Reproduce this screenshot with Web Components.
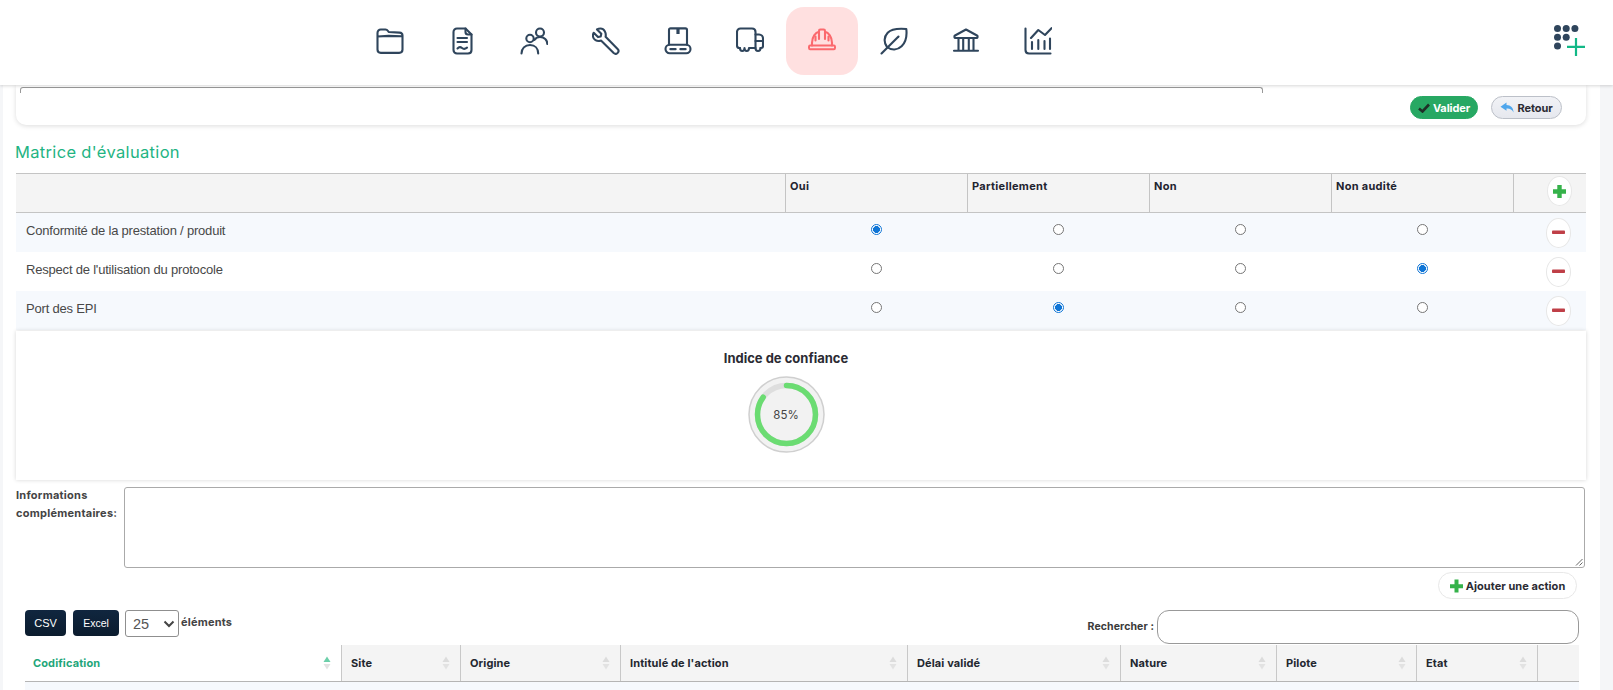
<!DOCTYPE html>
<html lang="fr"><head><meta charset="utf-8"><title>Matrice</title>
<style>
html,body{margin:0;padding:0;height:690px;overflow:hidden;background:#f5f6f8;font-family:Inter,"Liberation Sans",sans-serif;color:#333}
</style></head><body>
<app-header></app-header>
<page-body>
  <top-card></top-card>
  <section-title>Matrice d'évaluation</section-title>
  <eval-matrix></eval-matrix>
  <gauge-card value="85">Indice de confiance</gauge-card>
  <info-field></info-field>
  <action-bar></action-bar>
  <list-tools></list-tools>
  <list-head></list-head>
</page-body>
<script>
const INK='#2f455c';
const ICONS={
folder:`<path d="M1.500 6c0-2 1.300-3.500 3.300-3.500h4.700c1.200 0 1.800.5 2.500 1.500l.7 1 10.800.6c1.700.1 3 1.100 3 3v14c0 1.900-1.300 3.300-3.300 3.300H4.800c-2 0-3.300-1.400-3.300-3.300zM1.500 9.500l11-.6 13 .4"/>`,
doc:`<path d="M9 1.500h8.500l6 6V23c0 2-1.500 3.500-3.500 3.500H9C7 26.500 5.500 25 5.500 23V5C5.500 3 7 1.500 9 1.500z"/><path d="M17.500 1.500V5c0 1.500 1 2.500 2.500 2.500h3.500M9.500 11h9.500M9.500 15h9.500M9.500 21.500c1.500-1.700 3-1.700 4.500-.5s3.200 1 5-.3"/>`,
users:`<circle cx="10" cy="11.500" r="3.700"/><circle cx="20" cy="5.500" r="4"/><path d="M1.500 26.500c0-5 3.500-8.500 8.500-8.500s8.200 3.500 8.200 8.500M14.500 12.800c1.400-1.800 3.300-2.800 5.500-2.800 4.300 0 7.300 3 7.300 7"/>`,
wrench:`<path d="M8.500 1.500c-1.300 0-2.500.3-3.500.9l4.300 4.300-.6 2.700-2.700.7L1.700 5.800C1 7 .8 8.300 1 9.600c.6 3 3.700 5 6.900 4.300l1.100-.3L21.700 26c1.300 1.100 3 1 4-.1s1-2.800-.1-3.900L13.600 9.700c.8-3.800-1.300-8.200-5.100-8.200z"/>`,
conveyor:`<rect x="1.500" y="17.800" width="25" height="8.500" rx="4.200"/><path d="M5 17.800V3c0-1 .6-1.600 1.600-1.600h14.800c1 0 1.600.6 1.600 1.600v14.800"/><path d="M14 1.500v5.500" stroke-width="3.200" stroke-linecap="butt"/><path d="M6.500 22.100h5M16.500 22.100h5" stroke-width="2.400"/>`,
truck:`<path d="M4 21H3.500C2 21 1 19.800 1 18.300V5C1 2.900 2.500 1.500 4.500 1.500H16c2 0 3.500 1.500 3.500 3.500v16H18"/><path d="M19.500 7.500H23c2.500 0 4 2 4 4V19c0 1.200-.8 2-2 2h-.5M19.500 14H27"/><path d="M4 21c0 4 4.500 4 4.500 0 0 4 4.500 4 4.500 0M13 21h5.500M19.500 21c0 4 5 4 5 0"/>`,
helmet:`<path d="M2 18.500h24c1.300 0 1.300 3.700 0 3.700H2c-1.300 0-1.300-3.700 0-3.700z"/><path d="M4 18.500v-2.700C4 10 7.500 5.500 11 4.800v-.9c0-.8.500-1.400 1.300-1.400h3.400c.8 0 1.300.6 1.300 1.400v.9c3.500.7 7 5.200 7 11v2.700"/><path d="M11 5v7M17 5v7M7.500 9.500v4M20.500 9.500v4"/>`,
leaf:`<path d="M26.300 2c-7-.6-14.500-.6-18.600 3.700C3.700 9.800 3.800 15.800 7 20c4.500 3.500 10.500 3.300 14.600-.7C26 15 27 8 26.300 2z"/><path d="M1.500 26.500 18.500 9.500"/>`,
bank:`<path d="M14 2.500 3 8.500c-1 .6-.8 2.500.5 2.500h21c1.300 0 1.500-1.900.5-2.500z"/><path d="M6.500 11v12M11.200 11v12M16.800 11v12M21.500 11v12M2 23.700h24"/>`,
chart:`<path d="M1.500 1.500V23c0 2 1.500 3.500 3.500 3.500h21.500"/><path d="M7 11l7.300-8 6.700 5 6.500-6.800"/><path d="M8 22v-7M14.300 22V13M20.500 22v-8M26 22V11.500"/>`
};
function def(name,css,html,extra){
  customElements.define(name,class extends HTMLElement{
    constructor(){super();const r=this.attachShadow({mode:'open'});
      r.innerHTML=`<style>${css}</style>`+(typeof html==='function'?html(this):html);}
    connectedCallback(){if(typeof extra==='function')extra(this,this.shadowRoot);}
  });
}
const HEAD='700 11px Inter,"Liberation Sans",sans-serif';
def('nav-icon',`
:host{display:flex;width:72px;height:68px;align-items:center;justify-content:center;border-radius:18px}
:host([active]){background:#ffe0e0}
svg{width:28px;height:28px;fill:none;stroke:${INK};stroke-width:2.100;stroke-linecap:round;stroke-linejoin:round;display:block}
:host([active]) svg{stroke:#fb6a6e}`,'<svg viewBox="0 0 28 28"></svg>',(el,r)=>{r.querySelector('svg').innerHTML=ICONS[el.getAttribute('name')]||''});
def('app-header',`
:host{display:flex;height:85px;box-sizing:border-box;padding:7px 27px 0 354px;background:#fff;position:relative;z-index:2;box-shadow:0 1px 3px rgba(0,0,0,.16);justify-content:space-between}
nav{display:flex;height:68px}
.grid{width:32px;height:32px;margin-top:18px;display:block}`,`<nav>
<nav-icon name="folder"></nav-icon><nav-icon name="doc"></nav-icon><nav-icon name="users"></nav-icon><nav-icon name="wrench"></nav-icon><nav-icon name="conveyor"></nav-icon><nav-icon name="truck"></nav-icon><nav-icon name="helmet" active></nav-icon><nav-icon name="leaf"></nav-icon><nav-icon name="bank"></nav-icon><nav-icon name="chart"></nav-icon></nav>
<svg class="grid" viewBox="0 0 32 32"><g fill="${INK}"><circle cx="3.500" cy="3.500" r="3.500"/><circle cx="12.200" cy="3.500" r="3.500"/><circle cx="20.900" cy="3.500" r="3.500"/><circle cx="3.500" cy="12.200" r="3.500"/><circle cx="12.200" cy="12.200" r="3.500"/><circle cx="3.500" cy="20.900" r="3.500"/></g><path d="M22 13v18M13 21.800h18" stroke="#12b886" stroke-width="2.200" fill="none"/></svg>`);
def('page-body',`:host{display:block;margin:0 13px 0 3px;background:#fff;height:605px;overflow:hidden;padding:0 0 0 13px;box-sizing:border-box}`,'<slot></slot>');
def('pill-btn',`
:host{display:inline-flex;align-items:center;justify-content:center;gap:3px;box-sizing:border-box;height:23px;border-radius:12px;font:${HEAD};letter-spacing:-.1px;color:#2b2b33;border:1px solid #bcc0c8;background:linear-gradient(#f1f2f6,#e6e8ee)}
:host([kind=ok]){background:#27a863;border-color:#27a863;color:#fff}`,`<slot name="i"></slot><slot></slot>`);
def('top-card',`
:host{display:flex;box-sizing:border-box;height:40px;width:1570px;background:#fff;border-radius:0 0 10px 10px;box-shadow:0 1px 5px rgba(0,0,0,.14);padding:0 24px 0 4px;position:relative}
.clip{width:1243px;height:6px;margin-top:2px;border:1px solid #999;border-bottom:0;box-sizing:border-box;border-radius:3px 3px 0 0}
.acts{margin-left:auto;display:flex;gap:13px;padding-top:11px}
pill-btn{flex:none}
svg{display:block}`,`<div class="clip"></div><div class="acts">
<pill-btn kind="ok" style="width:68px"><svg slot="i" viewBox="0 0 12 10" width="12" height="10"><path d="M1 5.500l3.500 3 6.500-7" fill="none" stroke="#1f2f27" stroke-width="2.600"/></svg>Valider</pill-btn>
<pill-btn style="width:71px"><svg slot="i" viewBox="0 0 14 11" width="14" height="11"><path d="M6.500.500L.5 4.700 6.500 8.800V6.600c3.200-.2 5.500.8 7 3.900 0-5-2.800-7.300-7-7.600z" fill="#4fa6ec"/></svg>Retour</pill-btn></div>`);
def('section-title',`:host{display:block;font:400 16.500px/20px Inter,"Liberation Sans",sans-serif;color:#1fb483;margin:17px 0 0 -1px;height:31px;letter-spacing:.33px}`,'<slot></slot>');
def('round-btn',`
:host{display:flex;width:25px;height:30px;box-sizing:border-box;border:1px solid #e7e7e7;border-radius:50%;background:#fff;align-items:center;justify-content:center}
svg{width:15px;height:15px;display:block}`,'<svg viewBox="0 0 15 15"></svg>',(el,r)=>{const s=r.querySelector('svg');
 s.innerHTML=el.getAttribute('kind')==='add'?'<path d="M5.300 1h4.400v4.300H14v4.400H9.700V14H5.300V9.700H1V5.300h4.300z" fill="#35b24a"/>':'<rect x="1" y="5.500" width="13" height="3.600" rx=".8" fill="#bf3f47"/>'});
def('radio-dot',`
:host{display:block;box-sizing:border-box;width:11px;height:11px;border-radius:50%;border:1px solid #767676;background:#fff}
:host([on]){border:1.500px solid #0f75d6;background:radial-gradient(circle,#0f75d6 0 3.200px,#fff 3.700px)}`,'');
def('eval-matrix',`
:host{display:block;width:1570px;font:13px "Liberation Sans",sans-serif;letter-spacing:-.2px;color:#484848}
.row{display:grid;grid-template-columns:769px 182px 182px 182px 182px 73px;align-items:center;height:39px}
.head{height:40px;background:#f4f4f4;border-top:1px solid #c4c4c4;border-bottom:1px solid #c4c4c4;box-sizing:border-box;align-items:stretch;font:${HEAD};letter-spacing:.3px;color:#1f2430}
.head>div{padding:5px 4px;border-left:1px solid #c4c4c4}
.head>div:first-child{border-left:0}
.name{padding:0 0 4px 10px}
.alt{background:#f6f9fd}
.rd{display:flex;justify-content:center;padding-bottom:6px}
.act{display:flex;padding-left:33px}
.head .act{padding:2px 0 0 33px}`,`
<div class="row head"><div></div><div>Oui</div><div>Partiellement</div><div>Non</div><div>Non audité</div><div class="act"><round-btn kind="add"></round-btn></div></div>
<div class="row alt"><div class="name">Conformité de la prestation / produit</div><div class="rd"><radio-dot on></radio-dot></div><div class="rd"><radio-dot></radio-dot></div><div class="rd"><radio-dot></radio-dot></div><div class="rd"><radio-dot></radio-dot></div><div class="act"><round-btn></round-btn></div></div>
<div class="row"><div class="name">Respect de l'utilisation du protocole</div><div class="rd"><radio-dot></radio-dot></div><div class="rd"><radio-dot></radio-dot></div><div class="rd"><radio-dot></radio-dot></div><div class="rd"><radio-dot on></radio-dot></div><div class="act"><round-btn></round-btn></div></div>
<div class="row alt"><div class="name">Port des EPI</div><div class="rd"><radio-dot></radio-dot></div><div class="rd"><radio-dot on></radio-dot></div><div class="rd"><radio-dot></radio-dot></div><div class="rd"><radio-dot></radio-dot></div><div class="act"><round-btn></round-btn></div></div>`);
def('gauge-card',`
:host{display:block;box-sizing:border-box;width:1570px;height:149px;margin-top:1px;background:#fff;box-shadow:0 0 4px rgba(0,0,0,.17);padding:19px 30px 0 0;text-align:center;font:700 13px/16px Inter,"Liberation Sans",sans-serif;color:#2b2b33}
.g{position:relative;width:77px;height:77px;margin:10px auto 0}
svg{width:77px;height:77px;display:block}
.v{position:absolute;inset:0;display:flex;align-items:center;justify-content:center;font:400 11.500px Inter,"Liberation Sans",sans-serif;color:#444}`,`<slot></slot>
<div class="g"><svg viewBox="0 0 77 77"><circle cx="38.500" cy="38.500" r="37.500" fill="#f2f2f2" stroke="#cfcfcf" stroke-width="1.500"/><circle cx="38.500" cy="38.500" r="29" fill="none" stroke="#dedede" stroke-width="5.500"/><circle cx="38.500" cy="38.500" r="29" fill="none" stroke="#6bdc72" stroke-width="5.500" stroke-linecap="round" stroke-dasharray="154.900 182.200" transform="rotate(-90 38.500 38.500)"/></svg><div class="v">85%</div></div>`);
def('info-field',`
:host{display:flex;margin-top:7px;height:81px;font:${HEAD};line-height:18px;letter-spacing:.25px;color:#444}
label{width:108px;flex:none;margin-top:-1px}
.ta{width:1461px;height:81px;box-sizing:border-box;border:1px solid #aaa;border-radius:3px;background:#fff;position:relative}
.ta svg{position:absolute;right:1px;bottom:1px;width:8px;height:8px}`,`<label>Informations complémentaires:</label><div class="ta"><svg viewBox="0 0 8 8"><path d="M1 7.500 7.500 1M4.500 7.500 7.500 4.500" stroke="#666" stroke-width="1"/></svg></div>`);
def('action-bar',`
:host{display:flex;justify-content:flex-end;width:1561px;margin-top:4px;height:27px}
.b{display:flex;align-items:center;gap:3px;box-sizing:border-box;width:139px;height:27px;border:1px solid #e8e8e8;border-radius:14px;font:${HEAD};letter-spacing:.05px;color:#2b2b33;justify-content:center;background:#fff}
svg{width:13px;height:14px;display:block}`,`<div class="b"><svg viewBox="0 0 13 14"><path d="M4.500.500h4v4.700H13v4H8.500v4.300h-4V9.200H0v-4h4.500z" fill="#35b24a"/></svg>Ajouter une action</div>`);
def('list-tools',`
:host{display:flex;align-items:flex-start;margin-top:11px;height:35px;padding-left:9px;width:1563px;box-sizing:border-box;font:${HEAD};color:#444}
.e{height:26px;box-sizing:border-box;border-radius:4px;background:linear-gradient(#10263f,#0b1c2e);color:#fff;font:400 10.500px "Liberation Sans",sans-serif;display:flex;align-items:center;justify-content:center;margin-right:7px}
.sel{width:54px;height:27px;box-sizing:border-box;border:1px solid #8f8f8f;border-radius:3px;display:flex;align-items:center;justify-content:space-between;padding:0 3px 0 7px;font:400 14.500px "Liberation Sans",sans-serif;color:#555;margin-left:-1px}
.sel svg{width:12px;height:8px;display:block}
.lbl{margin-left:2px;line-height:24px;letter-spacing:.2px}
.rech{margin-left:auto;line-height:34px;color:#3a3a3a;margin-right:3px;font-size:10.500px;letter-spacing:.1px}
.inp{width:422px;height:34px;box-sizing:border-box;border:1px solid #999;border-radius:12px;background:#fff}`,`<div class="e" style="width:41px;font-size:11px">CSV</div><div class="e" style="width:46px">Excel</div><div class="sel">25<svg viewBox="0 0 12 8"><path d="M1.500 1.500l4.500 4.500 4.500-4.500" fill="none" stroke="#444" stroke-width="2"/></svg></div><div class="lbl">éléments</div><div class="rech">Rechercher :</div><div class="inp"></div>`);
def('sort-arrows',`
:host{display:block;width:8px;height:14px;flex:none;margin-left:auto}
svg{display:block;width:8px;height:14px}`,'<svg viewBox="0 0 8 14"></svg>',(el,r)=>{const on=el.hasAttribute('up');
 r.querySelector('svg').innerHTML=`<path d="M4 .5 7.500 6H.5z" fill="${on?'#6ccfa9':'#dcdcdc'}"/><path d="M4 13.500 .5 8h7z" fill="#e2e2e2"/>`});
def('list-head',`
:host{display:block;margin-left:9px;width:1554px;font:${HEAD};letter-spacing:.12px;color:#23272f}
.h{display:grid;grid-template-columns:316px 119px 160px 287px 213px 156px 140px 121px 1fr;height:37px;background:#f4f4f4;border-bottom:1px solid #b5b5b5;box-sizing:border-box}
.h>div{display:flex;align-items:center;padding:0 10px 0 9px;border-left:1px solid #c8c8c8}
.h>div:first-child{border-left:0;background:#fff;color:#1fa67a;padding-left:8px}
.r{height:12px;background:#f6f9fd}`,`<div class="h">
<div>Codification<sort-arrows up></sort-arrows></div><div>Site<sort-arrows></sort-arrows></div><div>Origine<sort-arrows></sort-arrows></div><div>Intitulé de l'action<sort-arrows></sort-arrows></div><div>Délai validé<sort-arrows></sort-arrows></div><div>Nature<sort-arrows></sort-arrows></div><div>Pilote<sort-arrows></sort-arrows></div><div>Etat<sort-arrows></sort-arrows></div><div></div></div><div class="r"></div>`);
</script>
</body></html>
